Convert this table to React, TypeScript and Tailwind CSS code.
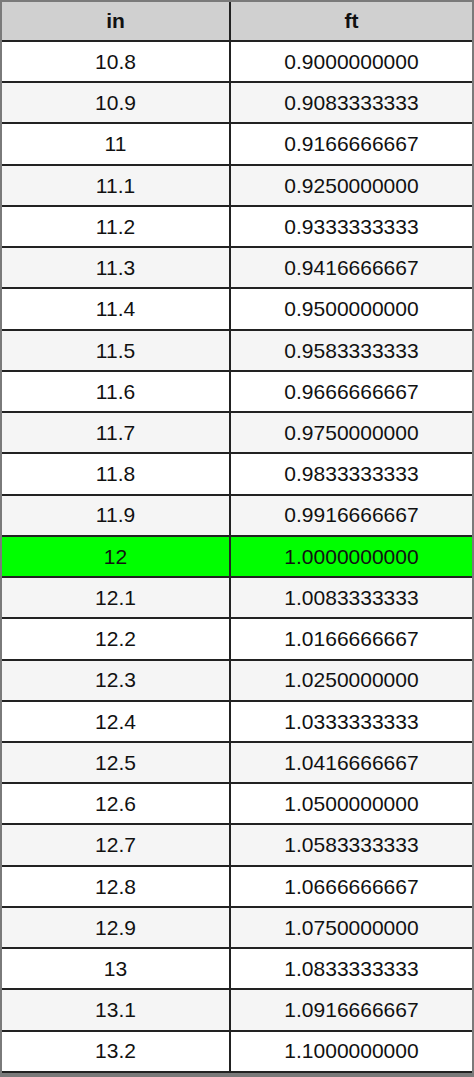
const rows: [string, string][] = [
  ["10.8", "0.9000000000"],
  ["10.9", "0.9083333333"],
  ["11", "0.9166666667"],
  ["11.1", "0.9250000000"],
  ["11.2", "0.9333333333"],
  ["11.3", "0.9416666667"],
  ["11.4", "0.9500000000"],
  ["11.5", "0.9583333333"],
  ["11.6", "0.9666666667"],
  ["11.7", "0.9750000000"],
  ["11.8", "0.9833333333"],
  ["11.9", "0.9916666667"],
  ["12", "1.0000000000"],
  ["12.1", "1.0083333333"],
  ["12.2", "1.0166666667"],
  ["12.3", "1.0250000000"],
  ["12.4", "1.0333333333"],
  ["12.5", "1.0416666667"],
  ["12.6", "1.0500000000"],
  ["12.7", "1.0583333333"],
  ["12.8", "1.0666666667"],
  ["12.9", "1.0750000000"],
  ["13", "1.0833333333"],
  ["13.1", "1.0916666667"],
  ["13.2", "1.1000000000"],
];

export default function App() {
  return (
    <div
      className="h-[1077px] w-[474px] bg-[#7a7a7a] pt-[2px] pl-[2px] pr-[2px] pb-[4px] text-[#111]"
      style={{ fontFamily: '"Liberation Sans", Arial, sans-serif' }}
    >
      <div className="flex h-full flex-col">
        {/* header */}
        <div className="flex h-[40px] shrink-0 border-b-2 border-[#222] bg-[#d0d0d0] text-[21px] font-bold">
          <div className="flex w-[229px] items-center justify-center border-r-2 border-[#222]">in</div>
          <div className="flex flex-1 items-center justify-center">ft</div>
        </div>
        {rows.map(([inch, ft], i) => {
          const bg = inch === "12" ? "bg-[#00ff00]" : i % 2 === 0 ? "bg-white" : "bg-[#f5f5f5]";
          return (
            <div key={inch} className={`flex min-h-0 flex-1 border-b-2 border-[#222] text-[21px] ${bg}`}>
              <div className="flex w-[229px] items-center justify-center border-r-2 border-[#222]">{inch}</div>
              <div className="flex flex-1 items-center justify-center">{ft}</div>
            </div>
          );
        })}
      </div>
    </div>
  );
}
